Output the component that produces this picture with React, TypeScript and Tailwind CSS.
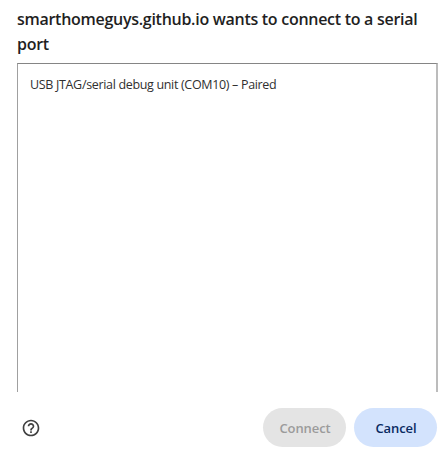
import { MdHelpOutline } from "react-icons/md";

export default function App() {
  return (
    <div className="flex h-[456px] w-[446px] flex-col bg-white pt-[7px] pr-[9px] pl-[17px] font-['Open_Sans','Noto_Sans',sans-serif] text-[#1f1f1f]">
      <h1 className="h-[56px] text-[16px] leading-[25px] font-semibold tracking-[-0.28px] whitespace-nowrap">
        smarthomeguys.github.io wants to connect to a serial
        <br />
        port
      </h1>
      <div className="h-[329px] w-[421px] border-t border-r-2 border-l border-t-[#858585] border-r-[#bcbcbc] border-l-[#a0a0a0] pt-[11px] pl-[12px]">
        <div className="text-[12.5px] leading-[20px] tracking-[-0.33px] whitespace-nowrap text-[#303030]">
          USB JTAG/serial debug unit (COM10) – Paired
        </div>
      </div>
      <div className="mt-[16px] flex h-[39px] items-center pl-[4px]">
        <MdHelpOutline className="size-[20px] text-[#404040]" />
        <div className="ml-auto flex gap-[8px] text-[13px] font-semibold tracking-[-0.1px]">
          <button className="h-[39px] w-[83px] rounded-full bg-[#e4e4e4] pt-[2px] pl-[1px] text-[#9b9b9b]">
            Connect
          </button>
          <button className="h-[39px] w-[83px] rounded-full bg-[#d3e3fd] pt-[2px] pl-[1px] text-[#092a62]">
            Cancel
          </button>
        </div>
      </div>
    </div>
  );
}
